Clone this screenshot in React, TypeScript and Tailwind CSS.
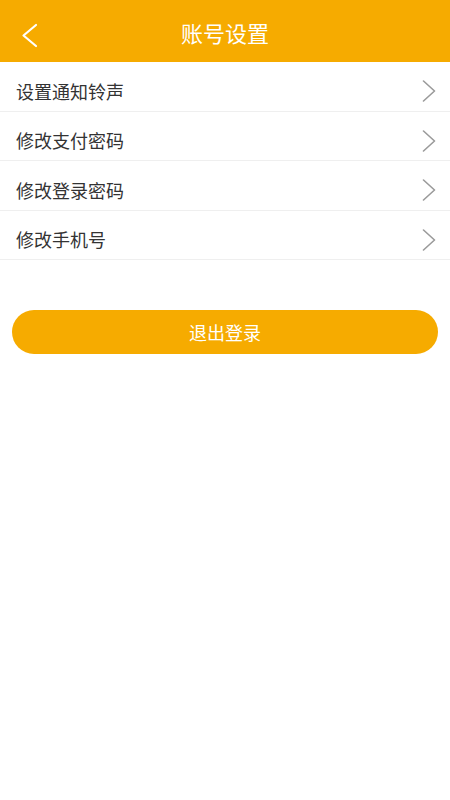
import React from 'react';

const items = ['设置通知铃声', '修改支付密码', '修改登录密码', '修改手机号'];

const ChevronRight: React.FC = () => (
  <svg width="14" height="22" viewBox="0 0 14 22" fill="none" stroke="#9a9a9a" strokeWidth="1.6" strokeLinecap="round" strokeLinejoin="round">
    <path d="M1.5 1l11 10-11 10" />
  </svg>
);

const App: React.FC = () => {
  return (
    <div className="min-h-[800px] w-[450px] bg-white" style={{ fontFamily: '"Noto Sans CJK SC", "Noto Sans", sans-serif' }}>
      {/* Header */}
      <header className="relative flex h-[62px] items-center justify-center bg-[#f6ab00]">
        <button className="absolute left-[21px] top-[23px]">
          <svg width="18" height="25" viewBox="0 0 18 25" fill="none" stroke="white" strokeWidth="2.2" strokeLinecap="round" strokeLinejoin="round">
            <path d="M15 2L2.5 12.5 15 23" />
          </svg>
        </button>
        <h1 className="pt-[2px] text-[22px] text-white">账号设置</h1>
      </header>

      {/* Settings list */}
      <ul>
        {items.map(item => (
          <li key={item} className="flex h-[49.5px] items-center justify-between border-b border-[#efefef] pl-[16px] pr-[14px] pt-[10px]">
            <span className="text-[18px] text-[#333]">{item}</span>
            <ChevronRight />
          </li>
        ))}
      </ul>

      <div className="px-[12px] pt-[50px]">
        <button className="flex h-[44px] w-full items-center justify-center rounded-full bg-[#f6ab00] text-[18px] text-white">
          退出登录
        </button>
      </div>
    </div>
  );
};

export default App;
